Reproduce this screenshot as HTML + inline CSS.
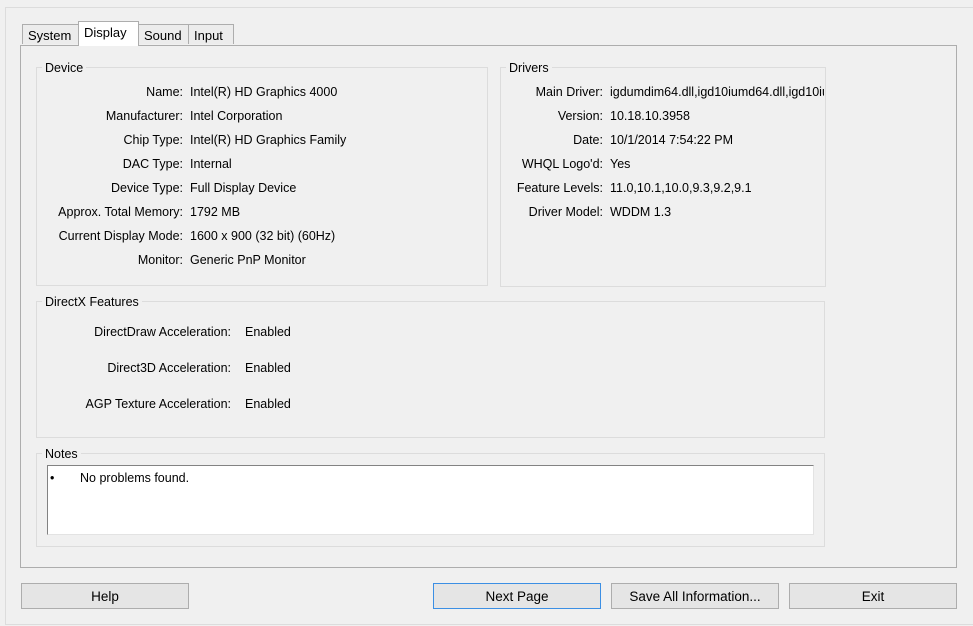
<!DOCTYPE html><html><head><style>
body{margin:0;width:973px;height:626px;background:#f0f0f0;font-family:"Liberation Sans",sans-serif;font-size:12.5px;color:#000;position:relative;overflow:hidden}
.a{position:absolute}
.win{left:5px;top:7px;width:980px;height:616px;border:1px solid #dcdcdc}
.tab{top:24px;height:20px;border:1px solid #adadad;border-bottom:none;background:#ececec;line-height:21px;font-size:13px;padding-left:5px;box-sizing:border-box}
.panel{left:20px;top:45px;width:937px;height:523px;border:1px solid #adadad;background:#f0f0f0;box-sizing:border-box}
.grp{border:1px solid #dcdcdc;box-sizing:border-box}
.lg{background:#f0f0f0;padding:0 3px;line-height:14px}
.l{text-align:right;line-height:14px;white-space:nowrap}
.v{line-height:14px;white-space:nowrap}
.btn{top:583px;height:26px;border:1px solid #adadad;background:#e5e5e5;box-sizing:border-box;text-align:center;line-height:25px;font-size:13.5px}
</style></head><body>
<div class="a win"></div>
<div class="a panel"></div>
<div class="a tab" style="left:22px;width:57px">System</div>
<div class="a tab" style="left:138px;width:51px">Sound</div>
<div class="a tab" style="left:188px;width:46px">Input</div>
<div class="a tab" style="left:78px;top:21px;height:25px;width:61px;background:#fff;line-height:22px">Display</div>

<div class="a grp" style="left:36px;top:67px;width:452px;height:219px"></div>
<div class="a lg" style="left:42px;top:61px">Device</div>
<div class="a grp" style="left:500px;top:67px;width:326px;height:220px"></div>
<div class="a lg" style="left:506px;top:61px">Drivers</div>
<div class="a grp" style="left:36px;top:301px;width:789px;height:137px"></div>
<div class="a lg" style="left:42px;top:295px">DirectX Features</div>
<div class="a grp" style="left:36px;top:453px;width:789px;height:94px"></div>
<div class="a lg" style="left:42px;top:447px">Notes</div>
<div class="a" style="left:47px;top:465px;width:767px;height:70px;background:#fff;border:1px solid #828282;border-right-color:#e3e3e3;border-bottom-color:#e3e3e3;box-sizing:border-box"></div>
<div class="a v" style="left:50px;top:471px">•</div>
<div class="a v" style="left:80px;top:471px">No problems found.</div>

<div class="a" style="left:0;top:85px;width:183px">
<div class="l" style="height:24px">Name:</div><div class="l" style="height:24px">Manufacturer:</div><div class="l" style="height:24px">Chip Type:</div><div class="l" style="height:24px">DAC Type:</div><div class="l" style="height:24px">Device Type:</div><div class="l" style="height:24px">Approx. Total Memory:</div><div class="l" style="height:24px">Current Display Mode:</div><div class="l" style="height:24px">Monitor:</div></div>
<div class="a" style="left:190px;top:85px">
<div class="v" style="height:24px">Intel(R) HD Graphics 4000</div><div class="v" style="height:24px">Intel Corporation</div><div class="v" style="height:24px">Intel(R) HD Graphics Family</div><div class="v" style="height:24px">Internal</div><div class="v" style="height:24px">Full Display Device</div><div class="v" style="height:24px">1792 MB</div><div class="v" style="height:24px">1600 x 900 (32 bit) (60Hz)</div><div class="v" style="height:24px">Generic PnP Monitor</div></div>

<div class="a" style="left:400px;top:85px;width:203px">
<div class="l" style="height:24px">Main Driver:</div><div class="l" style="height:24px">Version:</div><div class="l" style="height:24px">Date:</div><div class="l" style="height:24px">WHQL Logo'd:</div><div class="l" style="height:24px">Feature Levels:</div><div class="l" style="height:24px">Driver Model:</div></div>
<div class="a" style="left:610px;top:85px;width:214px;overflow:hidden">
<div class="v" style="height:24px">igdumdim64.dll,igd10iumd64.dll,igd10iumd64.dll</div><div class="v" style="height:24px">10.18.10.3958</div><div class="v" style="height:24px">10/1/2014 7:54:22 PM</div><div class="v" style="height:24px">Yes</div><div class="v" style="height:24px">11.0,10.1,10.0,9.3,9.2,9.1</div><div class="v" style="height:24px">WDDM 1.3</div></div>

<div class="a" style="left:0;top:325px;width:231px">
<div class="l" style="height:36px">DirectDraw Acceleration:</div><div class="l" style="height:36px">Direct3D Acceleration:</div><div class="l" style="height:36px">AGP Texture Acceleration:</div></div>
<div class="a" style="left:245px;top:325px">
<div class="v" style="height:36px">Enabled</div><div class="v" style="height:36px">Enabled</div><div class="v" style="height:36px">Enabled</div></div>

<div class="a btn" style="left:21px;width:168px">Help</div>
<div class="a btn" style="left:433px;width:168px;border-color:#3c8fe4">Next Page</div>
<div class="a btn" style="left:611px;width:168px">Save All Information...</div>
<div class="a btn" style="left:789px;width:168px">Exit</div>
</body></html>
